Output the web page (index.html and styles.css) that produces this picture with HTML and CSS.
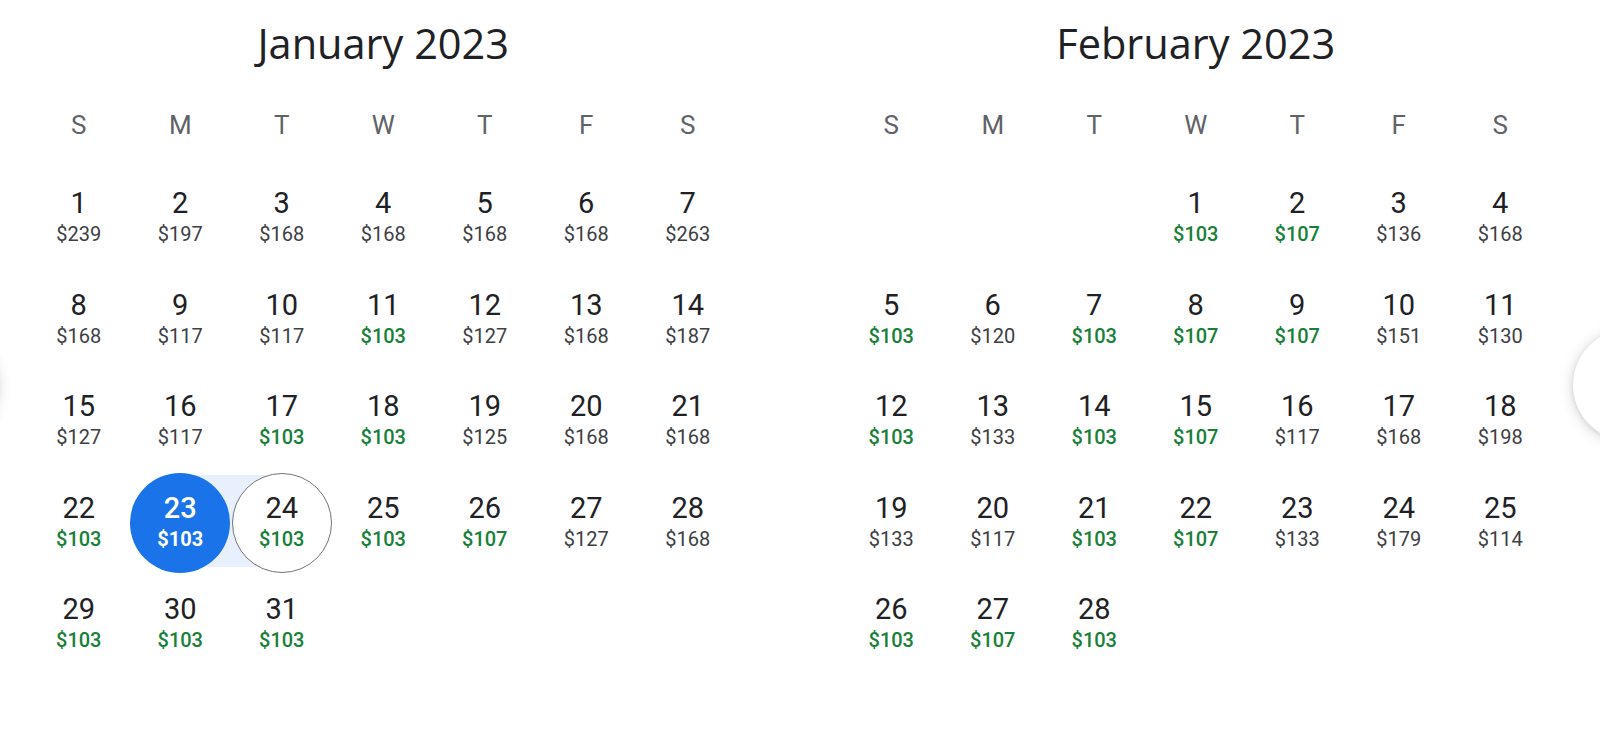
FILE: index.html
```html
<!DOCTYPE html>
<html lang="en">
<head>
    <meta charset="UTF-8">
    <meta name="viewport" content="width=device-width, initial-scale=1.0">
    <title>Date picker</title>
    <link rel="stylesheet" href="styles.css">
</head>
<body>
<div class="picker">
    <button class="nav-btn nav-prev" aria-label="Previous month"></button>

    <div class="months">
        <section class="month" id="month-jan">
            <h2 class="month-title">January 2023</h2>
            <div class="weekdays">
                <span>S</span><span>M</span><span>T</span><span>W</span><span>T</span><span>F</span><span>S</span>
            </div>
            <div class="days"></div>
        </section>

        <section class="month" id="month-feb">
            <h2 class="month-title">February 2023</h2>
            <div class="weekdays">
                <span>S</span><span>M</span><span>T</span><span>W</span><span>T</span><span>F</span><span>S</span>
            </div>
            <div class="days"></div>
        </section>
    </div>

    <button class="nav-btn nav-next" aria-label="Next month"></button>
</div>

<script>
    const months = [
        {
            id: 'month-jan',
            offset: 0,
            prices: [239, 197, 168, 168, 168, 168, 263,
                     168, 117, 117, 103, 127, 168, 187,
                     127, 117, 103, 103, 125, 168, 168,
                     103, 103, 103, 103, 107, 127, 168,
                     103, 103, 103],
            start: 23,
            end: 24
        },
        {
            id: 'month-feb',
            offset: 3,
            prices: [103, 107, 136, 168,
                     103, 120, 103, 107, 107, 151, 130,
                     103, 133, 103, 107, 117, 168, 198,
                     133, 117, 103, 107, 133, 179, 114,
                     103, 107, 103]
        }
    ];

    months.forEach(month => {
        const grid = document.querySelector('#' + month.id + ' .days');

        for (let i = 0; i < month.offset; i++) {
            grid.appendChild(document.createElement('div'));
        }

        month.prices.forEach((price, index) => {
            const day = index + 1;
            const cell = document.createElement('div');
            cell.className = 'day';
            if (day === month.start) cell.classList.add('range-start');
            if (day === month.end) cell.classList.add('range-end');

            const circle = document.createElement('div');
            circle.className = 'day-circle';

            const num = document.createElement('span');
            num.className = 'day-num';
            num.textContent = day;

            const cost = document.createElement('span');
            cost.className = price <= 107 ? 'day-price cheap' : 'day-price';
            cost.textContent = '$' + price;

            circle.appendChild(num);
            circle.appendChild(cost);
            cell.appendChild(circle);
            grid.appendChild(cell);
        });
    });
</script>
</body>
</html>
```

FILE: styles.css
```css
:root {
    --text: #202124;
    --text-secondary: #5f6368;
    --price: #3c4043;
    --green: #188038;
    --blue: #1a73e8;
    --range: #e8f0fe;
    --cell: 101.5px;
}

* {
    margin: 0;
    padding: 0;
    box-sizing: border-box;
}

body {
    background-color: #fff;
    color: var(--text);
    font-family: Roboto, 'Liberation Sans', sans-serif;
    overflow: hidden;
}

.picker {
    position: relative;
    height: 754px;
    overflow: hidden;
}

.months {
    display: flex;
    gap: 102px;
    padding-left: 28px;
}

.month {
    width: calc(var(--cell) * 7);
}

.month-title {
    height: 86px;
    line-height: 86px;
    margin-bottom: 2px;
    text-align: center;
    font-family: 'Open Sans', Roboto, sans-serif;
    font-size: 41.5px;
    font-weight: 400;
    color: var(--text);
}

.weekdays {
    display: grid;
    grid-template-columns: repeat(7, 1fr);
    height: 75px;
    line-height: 75px;
    margin-bottom: 5px;
    text-align: center;
    font-size: 26px;
    color: var(--text-secondary);
}

.days {
    display: grid;
    grid-template-columns: repeat(7, 1fr);
    grid-auto-rows: var(--cell);
}

.day {
    position: relative;
    display: flex;
    align-items: center;
    justify-content: center;
}

.day-circle {
    position: relative;
    z-index: 1;
    width: 100px;
    height: 100px;
    border-radius: 50%;
    display: flex;
    flex-direction: column;
    align-items: center;
    justify-content: center;
    gap: 5px;
}

.day-num {
    font-size: 29px;
    line-height: 26px;
    color: var(--text);
}

.day-price {
    font-size: 20px;
    line-height: 26px;
    color: var(--price);
}

.day-price.cheap {
    color: var(--green);
    font-weight: 500;
}

/* selected range */
.range-start::before,
.range-end::before {
    content: "";
    position: absolute;
    top: 2px;
    bottom: 7px;
    background-color: var(--range);
}

.range-start::before {
    left: 50%;
    right: 0;
}

.range-end::before {
    left: 0;
    right: 50%;
}

.range-start .day-circle {
    background-color: var(--blue);
}

.range-start .day-num,
.range-start .day-price {
    color: #fff;
    font-weight: 700;
}

.range-start .day-num {
    font-weight: 500;
}

.range-end .day-circle {
    background-color: #fff;
    border: 1.5px solid #70757a;
}

/* prev / next buttons, mostly off screen */
.nav-btn {
    position: absolute;
    top: 329px;
    width: 112px;
    height: 112px;
    border: none;
    border-radius: 50%;
    background-color: #fff;
    box-shadow: 0 2px 14px rgba(60, 64, 67, 0.22), 0 1px 4px rgba(60, 64, 67, 0.12);
    cursor: pointer;
}

.nav-prev {
    left: -114px;
}

.nav-next {
    left: 1573px;
}
```
